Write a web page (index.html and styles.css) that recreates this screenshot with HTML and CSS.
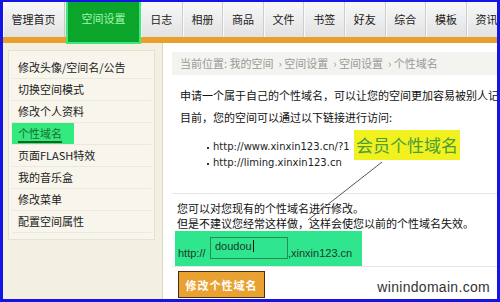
FILE: index.html
```html
<!DOCTYPE html>
<html lang="zh-CN">
<head>
    <meta charset="UTF-8">
    <title>个性域名</title>
    <link rel="stylesheet" href="styles.css">
</head>
<body>
<div class="frame">
    <ul class="nav">
        <li class="first">管理首页</li>
        <li class="active">空间设置</li>
        <li>日志</li>
        <li>相册</li>
        <li>商品</li>
        <li>文件</li>
        <li>书签</li>
        <li>好友</li>
        <li>综合</li>
        <li>模板</li>
        <li>资讯</li>
    </ul>
    <div class="main">
        <div class="side">
            <ul class="menu">
                <li>修改头像/空间名/公告</li>
                <li>切换空间模式</li>
                <li>修改个人资料</li>
                <li class="current"><span>个性域名</span></li>
                <li>页面FLASH特效</li>
                <li>我的音乐盒</li>
                <li>修改菜单</li>
                <li>配置空间属性</li>
            </ul>
        </div>
        <div class="content">
            <div class="crumb">当前位置: 我的空间 &nbsp;› 空间设置 &nbsp;› 空间设置 &nbsp;› 个性域名</div>
            <p class="intro">申请一个属于自己的个性域名，可以让您的空间更加容易被别人记住<br>目前，您的空间可以通过以下链接进行访问:</p>
            <ul class="links">
                <li>http://www.xinxin123.cn/?1</li>
                <li>http://liming.xinxin123.cn</li>
            </ul>
            <div class="edit">
                <p>您可以对您现有的个性域名进行修改。<br>但是不建议您经常这样做，这样会使您以前的个性域名失效。</p>
                <div class="domain">
                    <span>http://</span>
                    <span class="field">doudou<i class="caret"></i></span>
                    <span>,xinxin123.cn</span>
                </div>
            </div>
            <button class="submit">修改个性域名</button>

            <svg class="pointer" width="334" height="256">
                <line x1="219" y1="119" x2="145" y2="177" stroke="#555" stroke-width="1"/>
            </svg>
            <div class="callout">会员个性域名</div>
            <div class="mark">winindomain.com</div>
        </div>
    </div>
</div>
</body>
</html>
```

FILE: styles.css
```css
* {
    box-sizing: border-box;
}
body {
    margin: 0;
    font-family: "Noto Sans CJK SC", sans-serif;
    font-size: 11px;
    color: #111;
}
ul {
    list-style: none;
    margin: 0;
    padding: 0;
}
p {
    margin: 0;
}
.frame {
    width: 500px;
    height: 302px;
    border: solid #1414e6;
    border-width: 2px 3px 3px 3px;
    background: #f3f0e2;
    display: flex;
    flex-direction: column;
    overflow: hidden;
}

/* top tabs */
.nav {
    display: flex;
    flex-shrink: 0;
    height: 41px;
    border-bottom: 6px solid #e8a02a;
    background: linear-gradient(#f8f8f8, #e2e2e2);
}
.nav li {
    flex: 0 0 40.6px;
    text-align: center;
    line-height: 35px;
    color: #1a1a1a;
    border-left: 1px solid #cdcdcd;
    box-shadow: inset 1px 0 #fafafa;
    white-space: nowrap;
}
.nav .first {
    flex-basis: 62px;
    border-left: 0;
    border-right: 1px solid #c8c8c8;
}
.nav .active {
    flex-basis: 75px;
    margin-bottom: -7px;
    margin-left: 1px;
    background: #0ca52c;
    color: #a6f5ac;
    border: 2px solid #3ee87a;
    border-top: 0;
    line-height: 33px;
    box-shadow: none;
}
.nav .active + li {
    border-left: 0;
}

.main {
    flex: 1;
    display: flex;
    min-height: 0;
}

/* left menu */
.side {
    flex: 0 0 160px;
    padding: 7px 0 0 5px;
    border-right: 1px solid #dcd8c6;
}
.menu {
    width: 147px;
    padding: 6px 3px;
    background: #f7f5ec;
    border: 1px solid #e6e2d2;
}
.menu li {
    line-height: 21px;
    padding-left: 6px;
    border-bottom: 1px solid #ece9dc;
    white-space: nowrap;
    color: #1a1a1a;
}
.menu .current {
    padding-left: 0;
}
.menu .current span {
    display: inline-block;
    padding: 0 12px 0 6px;
    background: #33ea7e;
    color: #1d6b30;
    text-decoration: underline;
    text-decoration-thickness: 2px;
    text-underline-offset: 3px;
    text-decoration-color: #1f5a25;
}

/* right content */
.content {
    flex: 1;
    position: relative;
    background: #fff;
    padding: 9px 0 0 9px;
    overflow: hidden;
    white-space: nowrap;
}
.crumb {
    height: 23px;
    line-height: 23px;
    padding-left: 8px;
    background: #f3f3ef;
    color: #9a9a9a;
}
.intro {
    margin-top: 9px;
    padding-left: 8px;
    line-height: 22px;
}
.links {
    margin-top: 11px;
    padding-left: 41px;
    font-family: "DejaVu Sans", sans-serif;
    font-size: 10px;
    line-height: 16px;
    color: #222;
}
.links li {
    position: relative;
}
.links li::before {
    content: "";
    position: absolute;
    left: -6px;
    top: 8px;
    width: 2px;
    height: 2px;
    background: #333;
}
.edit {
    margin-top: 22px;
    padding-top: 7px;
    border-top: 1px solid #e6e6e6;
    border-bottom: 1px solid #e6e6e6;
}
.edit p {
    padding-left: 5px;
    line-height: 15px;
}
.domain {
    display: flex;
    align-items: flex-end;
    width: 187px;
    height: 35px;
    margin-left: 3px;
    padding: 0 0 6px 3px;
    background: #2fe68e;
    font-family: "Liberation Sans", sans-serif;
    line-height: 14px;
    color: #1c3a2a;
}
.domain span:first-child {
    width: 32px;
}
.field {
    position: relative;
    width: 78px;
    height: 22px;
    margin-bottom: 1px;
    padding: 1px 0 0 4px;
    border: 1px solid #2d8a50;
    font-size: 11px;
    color: #1c3a2a;
}
.caret {
    display: inline-block;
    width: 1px;
    height: 12px;
    margin-left: 1px;
    vertical-align: -2px;
    background: #111;
}
.submit {
    display: block;
    margin: 4px 0 0 6px;
    width: 87px;
    height: 27px;
    padding: 0;
    background: #e9a232;
    border: 1px solid #4a3010;
    color: #fff;
    font-family: "Noto Sans CJK SC", sans-serif;
    font-weight: bold;
    font-size: 11px;
    letter-spacing: 1px;
}

/* annotation over the page */
.pointer {
    position: absolute;
    left: 0;
    top: 0;
}
.callout {
    position: absolute;
    left: 191px;
    top: 87px;
    width: 106px;
    height: 30px;
    line-height: 30px;
    text-align: center;
    background: #f1f11f;
    color: #4a9e3a;
    font-size: 17px;
}
.mark {
    position: absolute;
    right: 7px;
    bottom: 4px;
    font-family: "Liberation Sans", sans-serif;
    font-size: 14px;
    letter-spacing: 0.3px;
    line-height: 16px;
    color: #333;
}
```
